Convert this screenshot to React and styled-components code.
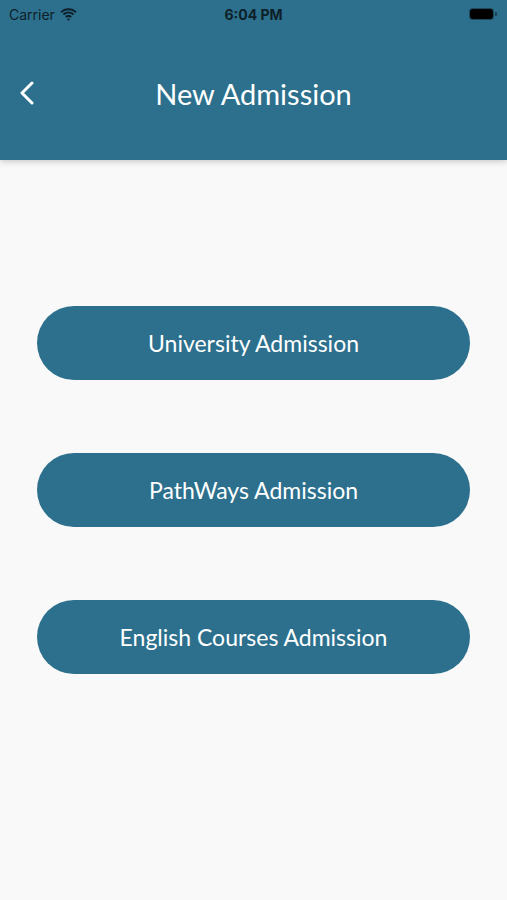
import React from 'react';
import styled, { createGlobalStyle } from 'styled-components';

const GlobalStyle = createGlobalStyle`
  html, body {
    margin: 0;
    padding: 0;
    background: #f9f9f9;
  }
  body {
    font-family: Lato, "Noto Sans", sans-serif;
  }
`;

const Screen = styled.div`
  width: 507px;
  min-height: 900px;
  background: #f9f9f9;
  display: flex;
  flex-direction: column;
`;

const Header = styled.header`
  height: 160px;
  background: #2c708d;
  box-shadow: 0 2px 6px rgba(0, 0, 0, 0.18);
  display: flex;
  flex-direction: column;
  position: relative;
  z-index: 1;
`;

const StatusBar = styled.div`
  height: 28px;
  display: grid;
  grid-template-columns: 1fr auto 1fr;
  align-items: center;
  padding: 0 9px;
  font-family: Inter, "Liberation Sans", sans-serif;
  font-size: 14px;
  color: #0d1f28;
`;

const Carrier = styled.div`
  display: flex;
  align-items: center;
  gap: 5px;
`;

const Clock = styled.div`
  font-weight: 700;
`;

const Battery = styled.div`
  justify-self: end;
  display: flex;
  align-items: center;
  margin-right: 1px;
`;

const BatteryBody = styled.div`
  width: 23px;
  height: 10px;
  border-radius: 3px;
  background: #000;
  box-shadow: 0 0 0 1px rgba(0, 0, 0, 0.35);
`;

const BatteryNub = styled.div`
  width: 2px;
  height: 4px;
  margin-left: 2px;
  border-radius: 0 1px 1px 0;
  background: rgba(0, 0, 0, 0.4);
`;

const NavBar = styled.div`
  flex: 1;
  display: grid;
  grid-template-columns: 60px 1fr 60px;
  align-items: center;
  padding-bottom: 2px;
`;

const BackButton = styled.button`
  background: none;
  border: none;
  padding: 0 0 0 19px;
  display: flex;
  align-items: center;
  cursor: pointer;
`;

const Title = styled.h1`
  margin: 0;
  text-align: center;
  color: #fff;
  font-family: Lato, "Noto Sans", sans-serif;
  font-weight: 400;
  font-size: 29px;
`;

const Content = styled.main`
  display: flex;
  flex-direction: column;
  align-items: center;
  gap: 73px;
  padding-top: 146px;
`;

const ActionButton = styled.button`
  width: 433px;
  height: 74px;
  border: none;
  border-radius: 37px;
  background: #2c708d;
  color: #fff;
  font-family: Lato, "Noto Sans", sans-serif;
  font-size: 23px;
  cursor: pointer;
`;

const WifiIcon = () => (
  <svg width="17" height="13" viewBox="0 0 17 13">
    <path d="M8.5 2.2c2.6 0 5 1 6.8 2.7l1.3-1.4C14.5 1.4 11.6.2 8.5.2S2.5 1.4.4 3.5l1.3 1.4C3.5 3.2 5.9 2.2 8.5 2.2z" fill="#0d1f28" />
    <path d="M8.5 5.6c1.7 0 3.2.6 4.4 1.7l1.3-1.4C12.7 4.5 10.7 3.6 8.5 3.6S4.3 4.5 2.8 5.9l1.3 1.4c1.2-1.1 2.7-1.7 4.4-1.7z" fill="#0d1f28" />
    <path d="M8.5 9c.8 0 1.5.3 2 .8l1.3-1.4C10.9 7.5 9.8 7 8.5 7s-2.4.5-3.3 1.4l1.3 1.4c.5-.5 1.2-.8 2-.8zM8.5 12.8l1.6-1.7c-.4-.4-1-.6-1.6-.6s-1.2.2-1.6.6z" fill="#0d1f28" />
  </svg>
);

const ChevronLeft = () => (
  <svg width="16" height="24" viewBox="0 0 16 24">
    <path d="M13 2 L3 12 L13 22" fill="none" stroke="#fff" strokeWidth="3" strokeLinecap="round" strokeLinejoin="round" />
  </svg>
);

const admissions = ['University Admission', 'PathWays Admission', 'English Courses Admission'];

const App = () => (
  <Screen>
    <GlobalStyle />
    <Header>
      <StatusBar>
        <Carrier>
          Carrier
          <WifiIcon />
        </Carrier>
        <Clock>6:04 PM</Clock>
        <Battery>
          <BatteryBody />
          <BatteryNub />
        </Battery>
      </StatusBar>
      <NavBar>
        <BackButton aria-label="Back">
          <ChevronLeft />
        </BackButton>
        <Title>New Admission</Title>
        <span />
      </NavBar>
    </Header>
    <Content>
      {admissions.map((item) => (
        <ActionButton key={item}>{item}</ActionButton>
      ))}
    </Content>
  </Screen>
);

export default App;
